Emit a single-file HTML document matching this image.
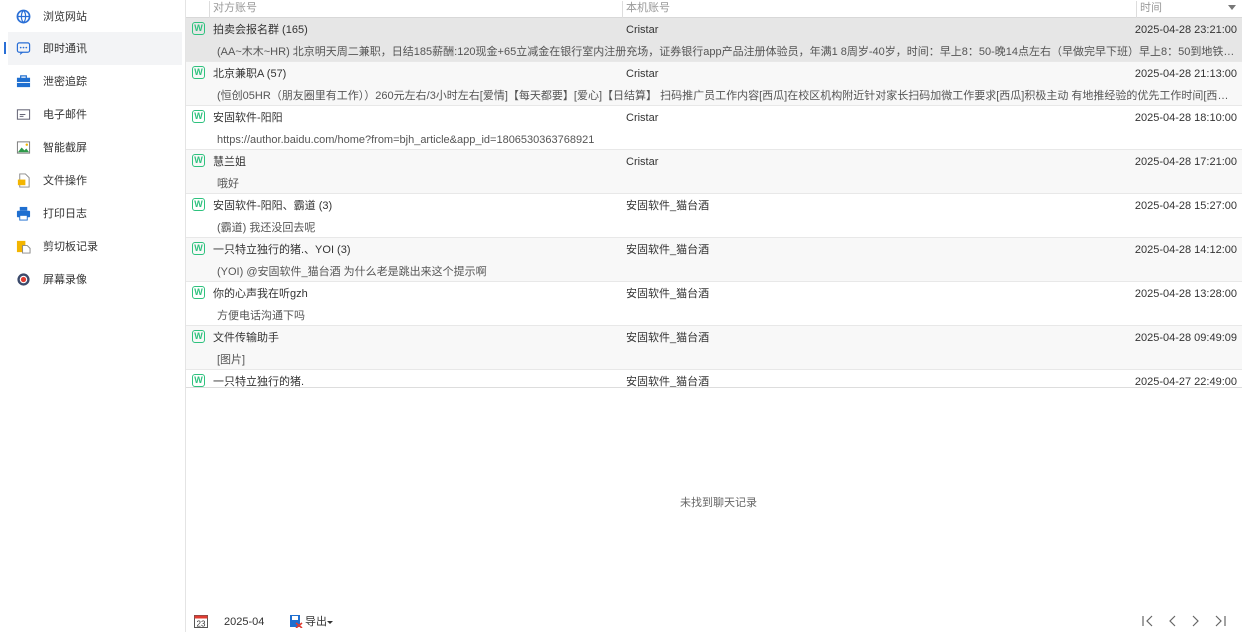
<!DOCTYPE html>
<html><head><meta charset="utf-8"><style>
*{margin:0;padding:0;box-sizing:border-box}
body{width:1242px;height:632px;background:#fff;font-family:"Liberation Sans","Noto Sans CJK SC",sans-serif;font-size:11px;line-height:14px;color:#333;position:relative;overflow:hidden}
.side{position:absolute;left:0;top:0;width:186px;height:632px;border-right:1px solid #e4e4e4}
.nav{position:absolute;left:0;height:33px;width:186px}
.nav .ic{position:absolute;left:16px;top:9px;width:15px;height:15px}
.nav span{position:absolute;left:43px;top:10px;font-size:11px;color:#333}
.nav.act{background:#f3f4f6;left:8px;width:174px}
.nav.act .ic{left:8px}.nav.act span{left:35px}
.bar{position:absolute;left:4px;top:42px;width:2px;height:12px;background:#2a6fd6}
.hdr{position:absolute;left:186px;top:0;width:1056px;height:18px;border-bottom:1px solid #d8d8d8;color:#999}
.hdr div{position:absolute;top:1px}
.sep{position:absolute;top:0;width:1px;height:17px;background:#ddd}
.row{position:absolute;left:186px;width:1056px;height:44px;border-bottom:1px solid #e8e8e8}
.w{position:absolute;left:6px;top:4px;width:13px;height:13px;border:1.5px solid #2ec27e;border-radius:3px;color:#2ec27e;font-size:9px;font-weight:bold;line-height:10px;text-align:center}
.n{position:absolute;left:27px;top:5px;white-space:nowrap;height:14px}
.l{position:absolute;left:440px;top:5px;white-space:nowrap;height:14px}
.t{position:absolute;right:5px;top:5px;height:14px}
.m{position:absolute;left:31px;top:27px;height:14px;color:#555;white-space:nowrap;width:1020px;overflow:hidden;text-overflow:ellipsis}
</style></head><body>
<div class="side">
<div class="bar"></div>
<div class="nav" style="top:0"><svg class="ic" viewBox="0 0 16 16"><circle cx="8" cy="8" r="6.5" fill="none" stroke="#2a6fd6" stroke-width="1.8"/><path d="M1.5 8h13M8 1.5c-3 3-3 10 0 13M8 1.5c3 3 3 10 0 13" fill="none" stroke="#2a6fd6" stroke-width="1.3"/></svg><span>浏览网站</span></div>
<div class="nav act" style="top:32px"><svg class="ic" viewBox="0 0 16 16"><rect x="1.5" y="2" width="13" height="10" rx="2" fill="none" stroke="#2a6fd6" stroke-width="1.3"/><path d="M5 12l-1 3 4-3" fill="#2a6fd6"/><circle cx="5" cy="7" r=".9" fill="#2a6fd6"/><circle cx="8" cy="7" r=".9" fill="#2a6fd6"/><circle cx="11" cy="7" r=".9" fill="#2a6fd6"/></svg><span>即时通讯</span></div>
<div class="nav" style="top:65px"><svg class="ic" viewBox="0 0 16 16"><rect x="1" y="4" width="14" height="10" fill="#1f6fd0"/><rect x="5" y="2" width="6" height="3" fill="none" stroke="#1f6fd0" stroke-width="1.3"/><path d="M1 9h14" stroke="#fff"/></svg><span>泄密追踪</span></div>
<div class="nav" style="top:98px"><svg class="ic" viewBox="0 0 16 16"><rect x="1.5" y="3" width="13" height="10" fill="none" stroke="#667" stroke-width="1.1"/><path d="M4 8h6M4 10h4" stroke="#667"/></svg><span>电子邮件</span></div>
<div class="nav" style="top:131px"><svg class="ic" viewBox="0 0 16 16"><rect x="1.5" y="2" width="13" height="12" fill="none" stroke="#777"/><path d="M2 13l4-5 3 3 2-2 3 4z" fill="#2e9a4a"/><circle cx="11.5" cy="5" r="1.3" fill="#f3b500"/></svg><span>智能截屏</span></div>
<div class="nav" style="top:164px"><svg class="ic" viewBox="0 0 16 16"><path d="M4 1h6l4 4v10H4z" fill="none" stroke="#888"/><rect x="2" y="7" width="8" height="6" fill="#f3b500"/></svg><span>文件操作</span></div>
<div class="nav" style="top:197px"><svg class="ic" viewBox="0 0 16 16"><rect x="4" y="1" width="8" height="4" fill="#1f6fd0"/><rect x="1" y="5" width="14" height="7" rx="1" fill="#1f6fd0"/><rect x="4" y="10" width="8" height="5" fill="#fff" stroke="#1f6fd0"/></svg><span>打印日志</span></div>
<div class="nav" style="top:230px"><svg class="ic" viewBox="0 0 16 16"><rect x="1" y="2" width="9" height="12" fill="#f3b500"/><path d="M7 7h5l3 3v5H7z" fill="#fff" stroke="#888"/></svg><span>剪切板记录</span></div>
<div class="nav" style="top:263px"><svg class="ic" viewBox="0 0 16 16"><circle cx="8" cy="8" r="6.5" fill="#3b4a6b"/><circle cx="8" cy="8" r="4" fill="#fff"/><circle cx="8" cy="8" r="2.8" fill="#e03c31"/></svg><span>屏幕录像</span></div>
</div>
<div class="hdr"><div class="sep" style="left:23px"></div><div style="left:27px">对方账号</div><div class="sep" style="left:436px"></div><div style="left:440px">本机账号</div><div class="sep" style="left:950px"></div><div style="left:954px">时间</div><div style="left:1042px;top:5px;width:0;height:0;border-left:4px solid transparent;border-right:4px solid transparent;border-top:5px solid #777"></div></div>
<div class="row" style="top:18px;background:#e6e6e6"><div class="w">W</div><div class="n">拍卖会报名群 (165)</div><div class="l">Cristar</div><div class="t">2025-04-28 23:21:00</div><div class="m">(AA~木木~HR) 北京明天周二兼职，日结185薪酬:120现金+65立减金在银行室内注册充场，证券银行app产品注册体验员，年满1 8周岁-40岁，时间：早上8：50-晚14点左右（早做完早下班）早上8：50到地铁15号线，安立路D口集合会合后统一出发</div></div>
<div class="row" style="top:62px;background:#f8f8f8"><div class="w">W</div><div class="n">北京兼职A (57)</div><div class="l">Cristar</div><div class="t">2025-04-28 21:13:00</div><div class="m">(恒创05HR（朋友圈里有工作））260元左右/3小时左右[爱情]【每天都要】[爱心]【日结算】 扫码推广员工作内容[西瓜]在校区机构附近针对家长扫码加微工作要求[西瓜]积极主动 有地推经验的优先工作时间[西瓜]每天下午2:30--5:30工资日结</div></div>
<div class="row" style="top:106px"><div class="w">W</div><div class="n">安固软件-阳阳</div><div class="l">Cristar</div><div class="t">2025-04-28 18:10:00</div><div class="m">https://author.baidu.com/home?from=bjh_article&amp;app_id=1806530363768921</div></div>
<div class="row" style="top:150px;background:#f8f8f8"><div class="w">W</div><div class="n">慧兰姐</div><div class="l">Cristar</div><div class="t">2025-04-28 17:21:00</div><div class="m">哦好</div></div>
<div class="row" style="top:194px"><div class="w">W</div><div class="n">安固软件-阳阳、霸道 (3)</div><div class="l">安固软件_猫台酒</div><div class="t">2025-04-28 15:27:00</div><div class="m">(霸道) 我还没回去呢</div></div>
<div class="row" style="top:238px;background:#f8f8f8"><div class="w">W</div><div class="n">一只特立独行的猪.、YOI (3)</div><div class="l">安固软件_猫台酒</div><div class="t">2025-04-28 14:12:00</div><div class="m">(YOI) @安固软件_猫台酒 为什么老是跳出来这个提示啊</div></div>
<div class="row" style="top:282px"><div class="w">W</div><div class="n">你的心声我在听gzh</div><div class="l">安固软件_猫台酒</div><div class="t">2025-04-28 13:28:00</div><div class="m">方便电话沟通下吗</div></div>
<div class="row" style="top:326px;background:#f8f8f8"><div class="w">W</div><div class="n">文件传输助手</div><div class="l">安固软件_猫台酒</div><div class="t">2025-04-28 09:49:09</div><div class="m">[图片]</div></div>
<div class="row" style="top:370px;height:18px;overflow:hidden;border-bottom:1px solid #ddd"><div class="w">W</div><div class="n">一只特立独行的猪.</div><div class="l">安固软件_猫台酒</div><div class="t">2025-04-27 22:49:00</div></div>
<div style="position:absolute;left:680px;top:496px;color:#666">未找到聊天记录</div>
<svg style="position:absolute;left:194px;top:614px" width="14" height="14" viewBox="0 0 14 14"><rect x=".5" y="1.5" width="13" height="12" fill="#fff" stroke="#555"/><rect x=".5" y="1.5" width="13" height="3" fill="#e03c31"/><text x="7" y="12.5" font-size="8" text-anchor="middle" fill="#333" font-family="Liberation Sans">23</text></svg>
<div style="position:absolute;left:224px;top:615px;color:#333">2025-04</div>
<svg style="position:absolute;left:289px;top:614px" width="14" height="14" viewBox="0 0 14 14"><rect x="1" y="1" width="10" height="12" fill="#1f6fd0"/><rect x="3" y="2" width="6" height="4" fill="#fff"/><path d="M7 9l6 5M13 9l-6 5" stroke="#e03c31" stroke-width="1.6"/></svg>
<div style="position:absolute;left:305px;top:615px;color:#333">导出</div>
<div style="position:absolute;left:327px;top:621px;border-left:3px solid transparent;border-right:3px solid transparent;border-top:3px solid #333"></div>
<svg style="position:absolute;left:1142px;top:615px" width="90" height="12" viewBox="0 0 90 12" fill="none" stroke="#666" stroke-width="1.2"><path d="M1 1v10M10 1L5 6l5 5M33 1l-5 5 5 5M51 1l5 5-5 5M74 1l5 5-5 5M83 1v10"/></svg>
</body></html>
